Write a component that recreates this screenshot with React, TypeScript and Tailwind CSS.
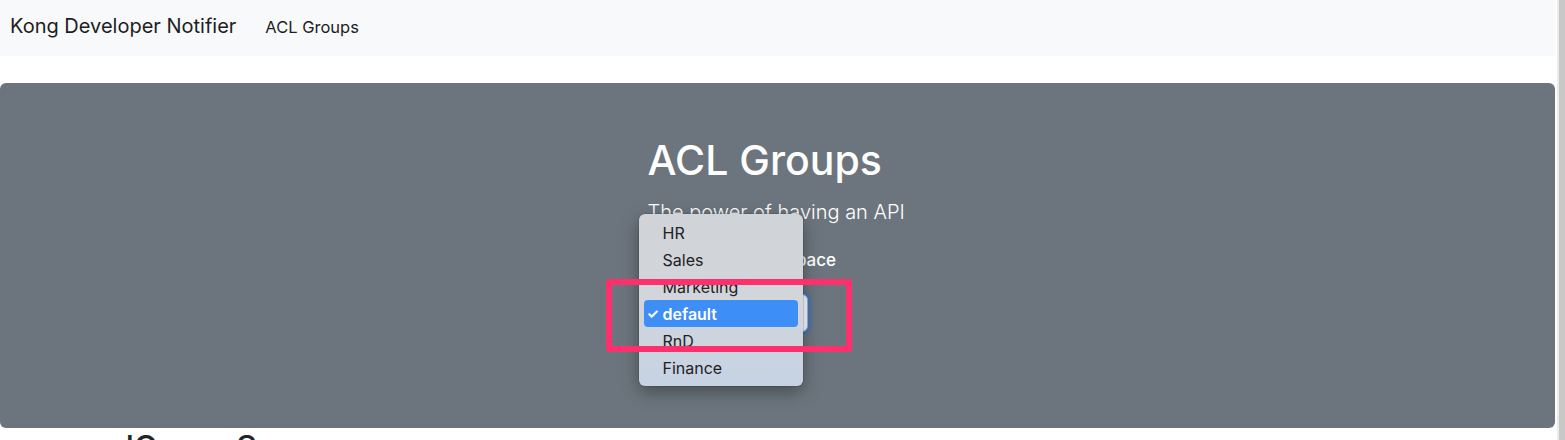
const groups = ["HR", "Sales", "Marketing", "default", "RnD", "Finance"]

function Navbar() {
    return (
        <nav className="flex h-[56px] items-baseline bg-[#f8f9fa] pl-[10px] pt-[11px]">
            <span className="text-[20px] leading-[30px] text-[#1d1d1f]">Kong Developer Notifier</span>
            <a className="ml-[29px] text-[16.5px] leading-[24px] text-[#1d1d1f]">ACL Groups</a>
        </nav>
    )
}

function NativeMenu({ selected }: { selected: string }) {
    return (
        <div className="absolute left-[-9px] top-[-80px] z-10 flex w-[164px] flex-col rounded-[6px] bg-gradient-to-b from-[#d0d3d7] via-[#d2d5da] to-[#c6d3e4] px-[5px] py-[5px] shadow-[0_6px_18px_rgba(0,0,0,0.35)] ring-1 ring-black/10">
            {groups.map((g) => {
                const active = g === selected
                return (
                    <div
                        key={g}
                        className={
                            active
                                ? "relative flex h-[27px] items-center rounded-[4px] bg-[#3d8ef6] pl-[19px] text-[16px] font-semibold text-white"
                                : "relative flex h-[27px] items-center pl-[19px] text-[16px] text-[#202124]"
                        }
                    >
                        {active && <span className="absolute left-[3px] text-[14px] font-bold">✓</span>}
                        {g}
                    </div>
                )
            })}
        </div>
    )
}

function Jumbotron() {
    return (
        <section className="mt-[27px] flex h-[345px] flex-col items-center rounded-[6px] bg-[#6c757d] pt-[53px] text-white">
            <div className="w-[260px]">
                <h1 className="text-[41px] font-medium leading-[48px]">ACL Groups</h1>
                <p className="mt-[13px] text-[20px] font-light leading-[30px]">The power of having an API</p>
                <label className="mt-[21px] block text-[17px] font-medium leading-[24px]">Select your Workspace</label>
                <div className="relative mt-[22px] w-[160px]">
                    <div className="flex h-[38px] items-center rounded-[6px] border border-[#86b7fe] bg-white px-3 text-[16px] text-[#212529] shadow-[0_0_0_4px_rgba(13,110,253,0.25)]">
                        default
                    </div>
                    <NativeMenu selected="default" />
                </div>
            </div>
        </section>
    )
}

export default function App() {
    return (
        <div className="relative flex h-[440px] w-[1565px] overflow-hidden bg-white font-['Inter',sans-serif]">
            <main className="w-[1555px]">
                <Navbar />
                <Jumbotron />
                <h2 className="mt-[4px] pl-[89px] text-[32px] font-medium leading-none text-[#212529]">aclGroup Summary</h2>
            </main>
            <div className="w-[2px] bg-white" />
            <div className="w-[2px] bg-[#ebebeb]" />
            <div className="flex-1 bg-[#c8c8c8]" />
            {/* annotation box */}
            <div className="absolute left-[606px] top-[279px] z-20 h-[73px] w-[246px] rounded-[3px] border-[6px] border-[#fd2f6c]" />
        </div>
    )
}
